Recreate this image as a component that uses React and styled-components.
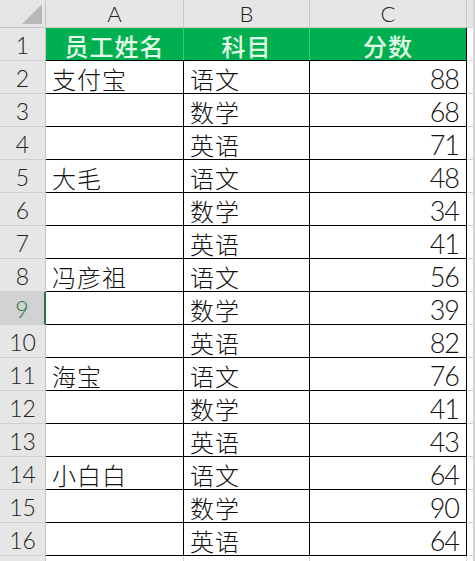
import styled, { createGlobalStyle } from 'styled-components'

const Global = createGlobalStyle`
    html, body {
        margin: 0;
        padding: 0;
        background: #ffffff;
        overflow: hidden;
    }
`

const rows = [
    ['支付宝', '语文', 88],
    ['', '数学', 68],
    ['', '英语', 71],
    ['大毛', '语文', 48],
    ['', '数学', 34],
    ['', '英语', 41],
    ['冯彦祖', '语文', 56],
    ['', '数学', 39],
    ['', '英语', 82],
    ['海宝', '语文', 76],
    ['', '数学', 41],
    ['', '英语', 43],
    ['小白白', '语文', 64],
    ['', '数学', 90],
    ['', '英语', 64],
]

const SELECTED_ROW = 9

const Sheet = styled.div`
    display: grid;
    grid-template-columns: 46px 138px 126px 157px 7px 1fr;
    grid-auto-rows: 33px;
    grid-template-rows: 28px;
    width: 475px;
    height: 561px;
    overflow: hidden;
`

const Corner = styled.div`
    position: relative;
    background: #e6e6e6;
    border-right: 1px solid #c6c6c6;
    border-bottom: 1px solid #c6c6c6;
    &::after {
        content: '';
        position: absolute;
        right: 3px;
        bottom: 3px;
        width: 0;
        height: 0;
        border-left: 20px solid transparent;
        border-bottom: 20px solid #b8b8b8;
    }
`

const ColHead = styled.div`
    display: flex;
    align-items: center;
    justify-content: center;
    background: #e6e6e6;
    border-right: 1px solid #c8c8c8;
    border-bottom: 1px solid #c8c8c8;
    color: #222;
    font-family: Lato, 'Liberation Sans', sans-serif;
    font-weight: 300;
    font-size: 22px;
`

const RowHead = styled.div`
    display: flex;
    align-items: center;
    justify-content: center;
    padding-top: 2px;
    box-sizing: border-box;
    background: ${p => (p.$active ? '#d2d2d2' : '#e6e6e6')};
    color: ${p => (p.$active ? '#217346' : '#222')};
    border-bottom: 1px solid #cfcfcf;
    border-right: ${p => (p.$active ? '2px solid #217346' : '1px solid #c6c6c6')};
    font-family: Lato, 'Liberation Sans', sans-serif;
    font-weight: 300;
    font-size: 23px;
`

const TitleCell = styled.div`
    display: flex;
    align-items: center;
    justify-content: center;
    padding-top: 2px;
    box-sizing: border-box;
    background: #00b050;
    color: #e3fbe6;
    border-right: 1px solid ${p => (p.$last ? '#000' : '#3fc478')};
    border-bottom: 1px solid #000;
    font-family: 'Noto Sans CJK SC', sans-serif;
    font-weight: 500;
    font-size: 24px;
    letter-spacing: 1px;
`

const Cell = styled.div`
    display: flex;
    align-items: center;
    justify-content: ${p => (p.$num ? 'flex-end' : 'flex-start')};
    padding: 3px ${p => (p.$num ? '7px' : '0')} 0 ${p => (p.$num ? '0' : '6px')};
    box-sizing: border-box;
    background: #fff;
    color: #111;
    border-right: 1px solid #000;
    border-bottom: 1px solid #000;
    font-family: ${p => (p.$num ? "Lato, 'Liberation Sans', sans-serif" : "'Noto Sans CJK SC', sans-serif")};
    font-weight: 300;
    font-size: ${p => (p.$num ? '27px' : '24px')};
    letter-spacing: ${p => (p.$num ? '-1px' : '1px')};
    white-space: nowrap;
`

const Blank = styled.div`
    background: ${p => (p.$head ? '#e6e6e6' : '#fff')};
    border-right: 1px solid #d4d4d4;
    border-bottom: 1px solid #d4d4d4;
`

const App = () => (
    <>
        <Global />
        <Sheet>
            <Corner />
            <ColHead>A</ColHead>
            <ColHead>B</ColHead>
            <ColHead>C</ColHead>
            <Blank $head />
            <Blank $head />

            <RowHead>1</RowHead>
            <TitleCell>员工姓名</TitleCell>
            <TitleCell>科目</TitleCell>
            <TitleCell $last>分数</TitleCell>
            <Blank />
            <Blank />

            {rows.map(([name, subject, score], i) => (
                <Row
                    key={i}
                    index={i + 2}
                    name={name}
                    subject={subject}
                    score={score}/>
            ))}

            {/* 第17行只露出一点点 */}
            <RowHead />
            <Blank />
            <Blank />
            <Blank />
            <Blank />
            <Blank />
        </Sheet>
    </>
)

const Row = ({index, name, subject, score}) => (
    <>
        <RowHead $active={index === SELECTED_ROW}>{index}</RowHead>
        <Cell>{name}</Cell>
        <Cell>{subject}</Cell>
        <Cell $num>{score}</Cell>
        <Blank />
        <Blank />
    </>
)

export default App
